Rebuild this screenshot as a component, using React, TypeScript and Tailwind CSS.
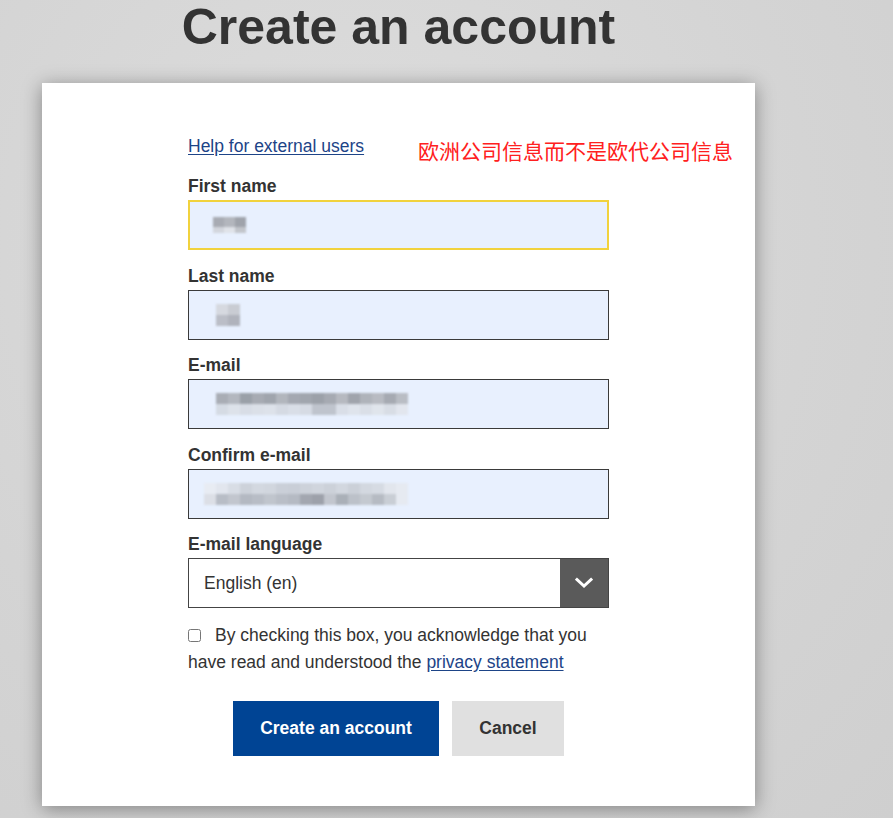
import React from "react";

const FONT = { fontFamily: '"Liberation Sans", Arial, sans-serif' };

function Pixels({ rows, cell = 12, h = 11 }: { rows: string[][]; cell?: number; h?: number }) {
  return (
    <div className="flex flex-col blur-[0.8px]">
      {rows.map((r, i) => (
        <div key={i} className="flex">
          {r.map((c, j) => (
            <div key={j} style={{ backgroundColor: c, width: cell, height: h }} />
          ))}
        </div>
      ))}
    </div>
  );
}

function Field({
  label,
  first,
  focused,
  children,
}: {
  label: string;
  first?: boolean;
  focused?: boolean;
  children?: React.ReactNode;
}) {
  return (
    <div className={first ? "" : "mt-[15.5px]"}>
      <div className="text-[17.5px] leading-[20px] font-bold text-[#333] mb-[4px]">{label}</div>
      <div
        className={
          focused
            ? "h-[50px] w-full bg-[#e8f0fe] border-2 border-[#f1d23d] flex items-center pl-[23px]"
            : "h-[50px] w-full bg-[#e8f0fe] border border-[#3a3a3a] flex items-center pl-[27px]"
        }
      >
        {children}
      </div>
    </div>
  );
}

export default function App() {
  return (
    <div
      className="min-h-screen w-full bg-[radial-gradient(ellipse_at_40%_30%,#dddddd_0%,#d4d4d4_60%,#cfcfcf_100%)] overflow-hidden"
      style={FONT}
    >
      <div className="w-[797px] flex flex-col items-center">
        <h1 className="mt-[2px] text-[50px] leading-[50px] font-bold text-[#333]">
          Create an account
        </h1>
        <div className="relative mt-[31px] w-[713px] bg-white shadow-[0_3px_18px_rgba(0,0,0,0.38)] pt-[53px] pb-[50px] flex justify-center">
          <div
            className="absolute left-[376px] top-[57px] text-[21px] leading-[21px] text-[#ff2020] whitespace-nowrap"
            style={{ fontFamily: '"Noto Sans CJK SC", sans-serif' }}
          >
            欧洲公司信息而不是欧代公司信息
          </div>
          <div className="w-[421px] flex flex-col">
            <div className="h-[20px] leading-[20px] text-[17.5px]">
              <a href="#" className="text-[#1d4487] underline underline-offset-[2px]">
                Help for external users
              </a>
            </div>
            <div className="h-[20px]" />
            <Field label="First name" first focused>
              <div className="flex flex-col blur-[0.8px]">
                <div className="flex">
                  <div className="w-[11px] h-[10px] bg-[#a8abb3]" />
                  <div className="w-[11px] h-[10px] bg-[#b3b6bd]" />
                  <div className="w-[11px] h-[10px] bg-[#9fa3ab]" />
                </div>
                <div className="flex">
                  <div className="w-[11px] h-[6px] bg-[#d3d6dd]" />
                  <div className="w-[11px] h-[6px] bg-[#e0e3e9]" />
                  <div className="w-[11px] h-[6px] bg-[#c2c5cb]" />
                </div>
              </div>
            </Field>
            <Field label="Last name">
              <Pixels
                rows={[
                  ["#d6d9e0", "#c9ccd3"],
                  ["#bbbec7", "#b0b3bc"],
                ]}
              />
            </Field>
            <Field label="E-mail">
              <Pixels
                rows={[
                  ["#a9adb5", "#b3b7bf", "#9aa0a8", "#a7abb3", "#a0a5ad", "#b2b6bd", "#a4a8b1", "#a1a6ae", "#9ca1a9", "#a6aab2", "#b6b9c0", "#a0a4ac", "#afb3ba", "#b8bbc2", "#a6aab2", "#b9bdc4"],
                  ["#d5dbe4", "#dde2ea", "#d8dde6", "#dbe0e8", "#dde2ea", "#d5dae3", "#d9dee7", "#d6dbe4", "#bfc4cd", "#bfc4cd", "#d9dee7", "#dfe4ec", "#dadfe7", "#e0e5ec", "#d8dde5", "#e2e6ee"],
                ]}
              />
            </Field>
            <Field label="Confirm e-mail">
              <div className="-ml-[12px]">
                <Pixels
                  rows={[
                    ["#e8ecf3", "#e2e6ee", "#d8dde5", "#cdd2da", "#d3d8e0", "#d1d6de", "#cacfd8", "#c9ced7", "#cdd2da", "#d0d5dd", "#ccd1d9", "#d2d7df", "#cbd0d8", "#d3d8e0", "#d6dbe3", "#e2e6ed", "#e6eaf1"],
                    ["#dcdfe6", "#b8bdc6", "#c2c6ce", "#b4b9c2", "#b8bdc6", "#c0c5cd", "#b9bec7", "#b5bac3", "#a3a7b0", "#9da1aa", "#c2c6ce", "#aab0b8", "#bcc1c9", "#c4c9d0", "#b6bbc3", "#c9ced5", "#e6eaf1"],
                  ]}
                />
              </div>
            </Field>
            <div className="mt-[15.5px]">
              <div className="text-[17.5px] leading-[20px] font-bold text-[#333] mb-[4px]">E-mail language</div>
              <div className="h-[50px] w-full flex border border-[#444] bg-white">
                <div className="flex-1 flex items-center pl-[15px] text-[17.5px] text-[#333]">English (en)</div>
                <div className="w-[48px] bg-[#5a5a5a] flex items-center justify-center">
                  <svg width="18" height="12" viewBox="0 0 18 12" fill="none">
                    <path d="M2 2.5 L9 9 L16 2.5" stroke="white" strokeWidth="3" strokeLinecap="square" />
                  </svg>
                </div>
              </div>
            </div>
            <p className="mt-[13.5px] text-[17.5px] leading-[27px] text-[#333]">
              <input
                type="checkbox"
                className="w-[13px] h-[13px] m-0 mr-[14px] align-[-1px]"
              />
              By checking this box, you acknowledge that you have read and understood the{" "}
              <a href="#" className="text-[#1d4487] underline underline-offset-[2px]">
                privacy statement
              </a>
            </p>
            <div className="mt-[25px] flex justify-center gap-[13px]">
              <button className="h-[55px] w-[206px] bg-[#004494] text-white font-bold text-[17.5px]">
                Create an account
              </button>
              <button className="h-[55px] w-[112px] bg-[#e0e0e0] text-[#333] font-bold text-[17.5px]">
                Cancel
              </button>
            </div>
          </div>
        </div>
      </div>
    </div>
  );
}
